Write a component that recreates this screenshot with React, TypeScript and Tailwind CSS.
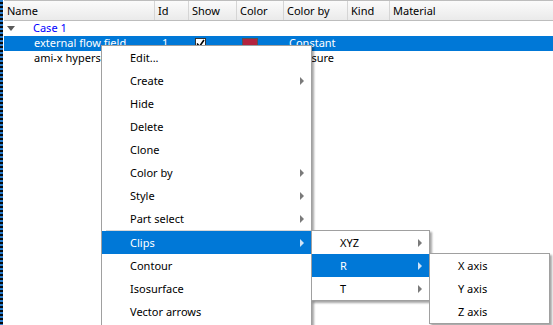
import { ReactNode } from "react";

const FONT = "font-['Segoe_UI','Noto_Sans',sans-serif]";

const COLS = [
  { label: "Name", w: "w-[151px]" },
  { label: "Id", w: "w-[34px]" },
  { label: "Show", w: "w-[48px]" },
  { label: "Color", w: "w-[47px]" },
  { label: "Color by", w: "w-[64px]" },
  { label: "Kind", w: "w-[42px]" },
  { label: "Material", w: "flex-1" },
];

function Arrow({ light }: { light?: boolean }) {
  return (
    <svg width="5" height="8" viewBox="0 0 5 8" className="shrink-0">
      <path d="M0 0 L4 4 L0 8 Z" fill={light ? "#cfe3f7" : "#7a7a7a"} />
    </svg>
  );
}

function MenuItem({ label, sub, active }: { label: string; sub?: boolean; active?: boolean }) {
  return (
    <div className={`h-[23px] flex items-center pl-[28px] pr-[6px] ${active ? "bg-[#0078d7] text-white" : "text-black"}`}>
      <span className="flex-1 leading-none">{label}</span>
      {sub && <Arrow light={active} />}
    </div>
  );
}

function Menu({ className, children }: { className: string; children: ReactNode }) {
  return (
    <div className={`absolute bg-white border border-[#a0a0a0] shadow-[2px_2px_2px_rgba(0,0,0,0.35)] ${className}`}>
      {children}
    </div>
  );
}

function Row({ children, selected }: { children: ReactNode; selected?: boolean }) {
  return (
    <div className={`h-[15px] flex items-center ${selected ? "bg-[#0078d7] text-white" : "text-black"}`}>{children}</div>
  );
}

export default function App() {
  return (
    <div className={`relative w-[553px] h-[325px] overflow-hidden bg-white text-[11px] ${FONT}`}>
      <div className="flex h-full">
        <div className="w-[3px] h-full bg-[repeating-linear-gradient(180deg,#2a7fd0_0px,#2a7fd0_2px,#0a0a0a_2px,#0a0a0a_4px)]" />
        <div className="w-[1px] h-full bg-white" />
        <div className="flex-1 flex flex-col">
          {/* header */}
          <div className="h-[21px] flex border-t border-b border-[#bdbdbd] bg-[linear-gradient(#fbfbfb,#eaeaea)]">
            {COLS.map((c, i) => (
              <div key={c.label} className={`${c.w} flex items-center pl-[3px] pt-[1px] ${i < COLS.length - 1 ? "border-r border-[#d5d5d5]" : ""}`}>
                {c.label}
              </div>
            ))}
          </div>
          {/* rows */}
          <Row>
            <svg width="8" height="5" viewBox="0 0 8 5" className="ml-[3px] mr-[18px]">
              <path d="M0 0 H8 L4 5 Z" fill="#5a5a5a" />
            </svg>
            <span className="text-[#0000ff]">Case 1</span>
          </Row>
          <Row selected>
            <div className="w-[151px] pl-[30px] whitespace-nowrap overflow-hidden">external flow field</div>
            <div className="w-[34px] pl-[7px]">1</div>
            <div className="w-[48px] pl-[6px] flex items-center">
              <div className="w-[11px] h-[11px] bg-white border border-[#333] flex items-center justify-center">
                <svg width="9" height="9" viewBox="0 0 9 9">
                  <path d="M1 4.5 L3.5 7.5 L8 1" stroke="#000" strokeWidth="1.6" fill="none" />
                </svg>
              </div>
            </div>
            <div className="w-[47px] pl-[5px] flex items-center">
              <div className="w-[16px] h-[12px] bg-[#b3243f] border border-[#555]" />
            </div>
            <div className="w-[64px] pl-[5px]">Constant</div>
          </Row>
          <Row>
            <div className="w-[151px] pl-[30px] whitespace-nowrap overflow-hidden">ami-x hypersonic</div>
            <div className="w-[34px]" />
            <div className="w-[48px]" />
            <div className="w-[47px]" />
            <div className="w-[64px] pl-[5px]">Pressure</div>
          </Row>
        </div>
      </div>

      <Menu className="left-[101px] top-[45px] w-[211px] h-[300px]">
        <MenuItem label="Edit..." />
        <MenuItem label="Create" sub />
        <MenuItem label="Hide" />
        <MenuItem label="Delete" />
        <MenuItem label="Clone" />
        <MenuItem label="Color by" sub />
        <MenuItem label="Style" sub />
        <MenuItem label="Part select" sub />
        <div className="h-[1px] ml-[4px] bg-[#d7d7d7]" />
        <MenuItem label="Clips" sub active />
        <MenuItem label="Contour" />
        <MenuItem label="Isosurface" />
        <MenuItem label="Vector arrows" />
      </Menu>

      <Menu className="left-[311px] top-[230px] w-[119px]">
        <MenuItem label="XYZ" sub />
        <MenuItem label="R" sub active />
        <MenuItem label="T" sub />
      </Menu>

      <Menu className="left-[429px] top-[253px] w-[121px]">
        <MenuItem label="X axis" />
        <MenuItem label="Y axis" />
        <MenuItem label="Z axis" />
      </Menu>
    </div>
  );
}
